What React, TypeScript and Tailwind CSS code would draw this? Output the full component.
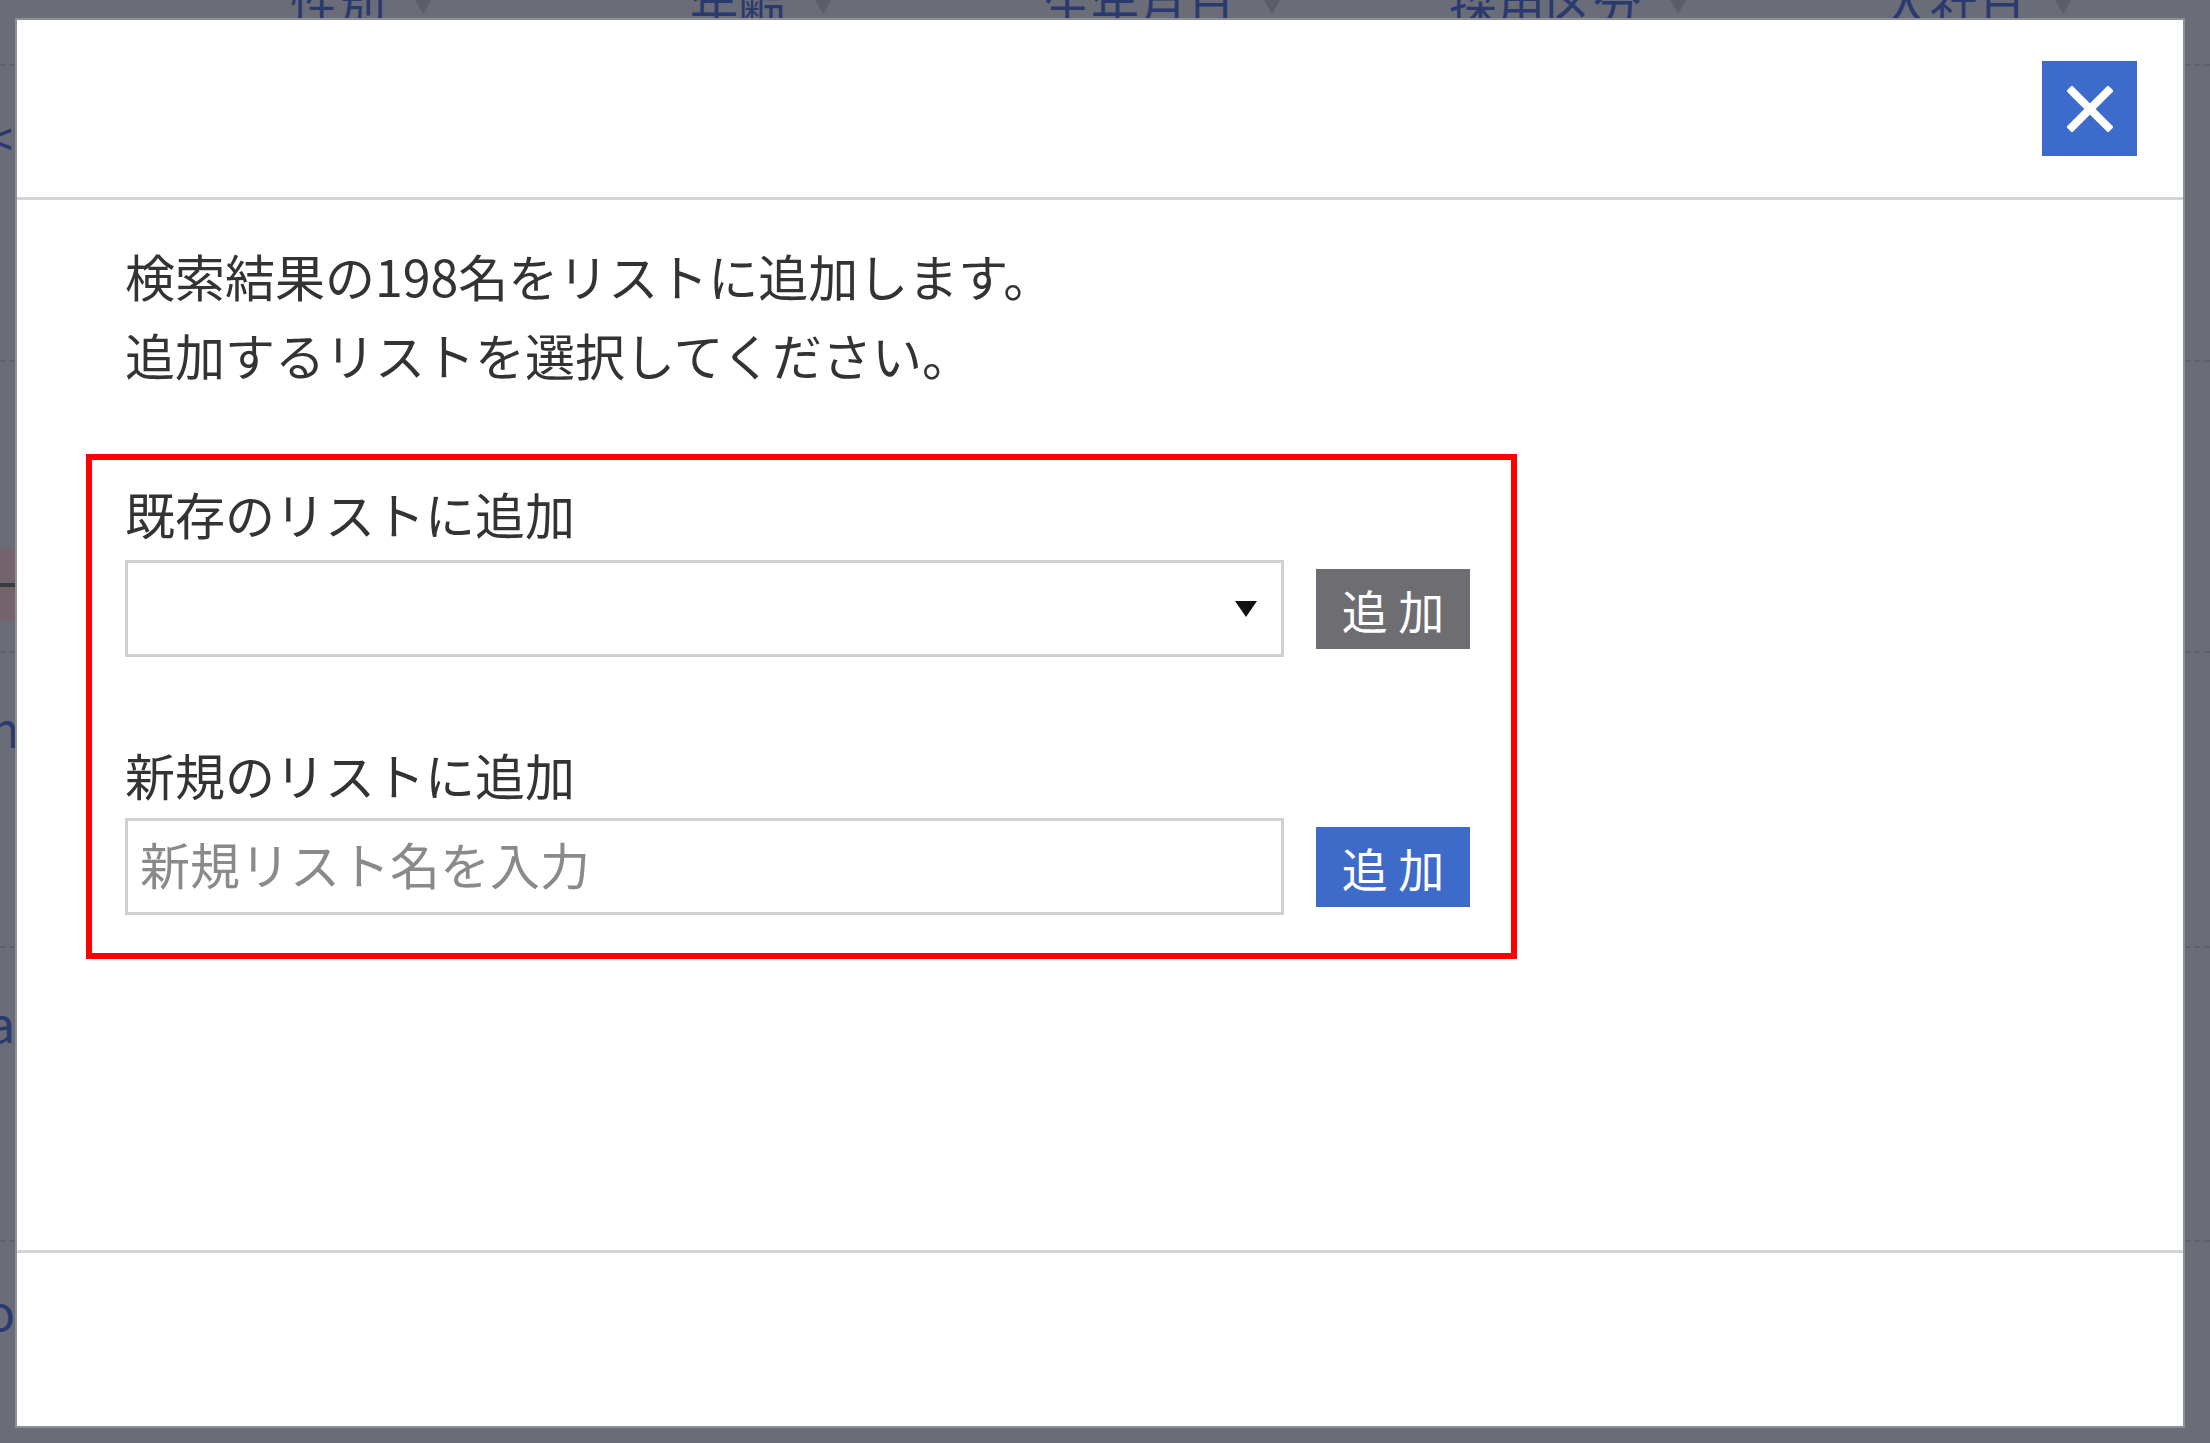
import React from 'react';

const columns = [
  { label: '性別', width: 'w-[400px]' },
  { label: '年齢', width: 'w-[353px]' },
  { label: '生年月日', width: 'w-[406px]' },
  { label: '採用区分', width: 'w-[433px]' },
  { label: '入社日', width: 'w-[300px]' },
];

function Backdrop() {
  return (
    <div className="flex flex-col">
      {/* table header, mostly hidden under the modal */}
      <div className="flex items-start pt-[0px] h-[88px] -mt-[22px] pl-[290px] border-b-2 border-dashed border-[#5e616b] text-[48px] leading-none text-[#2b3a6e]">
        {columns.map((c) => (
          <div key={c.label} className={`flex items-center gap-[26px] ${c.width}`}>
            <span>{c.label}</span>
            <span className="text-[22px] text-[#5b5e68]">▼</span>
          </div>
        ))}
      </div>
      <div className="h-[296px] border-b-2 border-dashed border-[#5e616b] pt-[46px]">
        <span className="block -ml-[14px] text-[48px] leading-none text-[#2b3a6e]">&lt;</span>
      </div>
      <div className="h-[291px] border-b-2 border-dashed border-[#5e616b] pt-[186px]">
        <div className="h-[73px] w-[20px] bg-[#75636b] flex flex-col justify-center">
          <div className="h-[4px] bg-[#3a3a44]" />
        </div>
      </div>
      <div className="h-[295px] border-b-2 border-dashed border-[#5e616b] pt-[50px]">
        <span className="block -ml-[10px] text-[48px] leading-none text-[#2b3a6e]">n</span>
      </div>
      <div className="h-[294px] border-b-2 border-dashed border-[#5e616b] pt-[50px]">
        <span className="block -ml-[12px] text-[48px] leading-none text-[#2b3a6e]">a</span>
      </div>
      <div className="h-[200px] pt-[44px]">
        <span className="block -ml-[14px] text-[48px] leading-none text-[#2b3a6e]">o</span>
      </div>
    </div>
  );
}

function AddButton({ color }: { color: string }) {
  return (
    <button className={`w-[154px] h-[80px] flex items-center justify-center text-white text-[46px] leading-none ${color}`}>
      追 加
    </button>
  );
}

export default function App() {
  return (
    <div className="relative w-[2210px] h-[1443px] overflow-hidden bg-[#6a6d77] font-['Noto_Sans_CJK_JP','Noto_Sans',sans-serif]">
      <Backdrop />

      {/* modal */}
      <div className="absolute left-[17px] top-[20px] w-[2166px] h-[1406px] bg-white flex flex-col shadow-[0_0_0_2px_#8d8f96]">
        <div className="h-[180px] shrink-0 flex items-center justify-end pr-[46px] border-b-[3px] border-[#d4d4d4]">
          <button className="w-[95px] h-[95px] bg-[#3d6bcb] flex items-center justify-center">
            <svg width="46" height="46" viewBox="0 0 46 46">
              <path d="M5 5 L41 41 M41 5 L5 41" stroke="white" strokeWidth="8" strokeLinecap="square" />
            </svg>
          </button>
        </div>

        <div className="flex-1 pl-[69px] pt-[36px] text-[#333] text-[50px]">
          <div className="pl-[39px] leading-[79px]">
            <p>検索結果の198名をリストに追加します。</p>
            <p>追加するリストを選択してください。</p>
          </div>

          <div className="mt-[60px] w-[1431px] h-[505px] border-[6px] border-[#ff0000] pl-[33px] pt-[17px]">
            <p className="leading-[72px]">既存のリストに追加</p>
            <div className="mt-[11px] flex items-center gap-[32px]">
              <div className="w-[1159px] h-[97px] border-[3px] border-[#d0d0d0] flex items-center justify-end pr-[24px]">
                <svg width="22" height="16" viewBox="0 0 22 16">
                  <path d="M0 0 L22 0 L11 16 Z" fill="#111" />
                </svg>
              </div>
              <AddButton color="bg-[#6d6d72]" />
            </div>

            <p className="mt-[81px] leading-[72px]">新規のリストに追加</p>
            <div className="mt-[8px] flex items-center gap-[32px]">
              <div className="w-[1159px] h-[97px] border-[3px] border-[#d0d0d0] flex items-center pl-[12px] pb-[6px]">
                <span className="text-[#8a8a8a]">新規リスト名を入力</span>
              </div>
              <AddButton color="bg-[#3e6bc9]" />
            </div>
          </div>
        </div>

        <div className="h-[176px] shrink-0 border-t-[3px] border-[#d4d4d4]" />
      </div>
    </div>
  );
}
